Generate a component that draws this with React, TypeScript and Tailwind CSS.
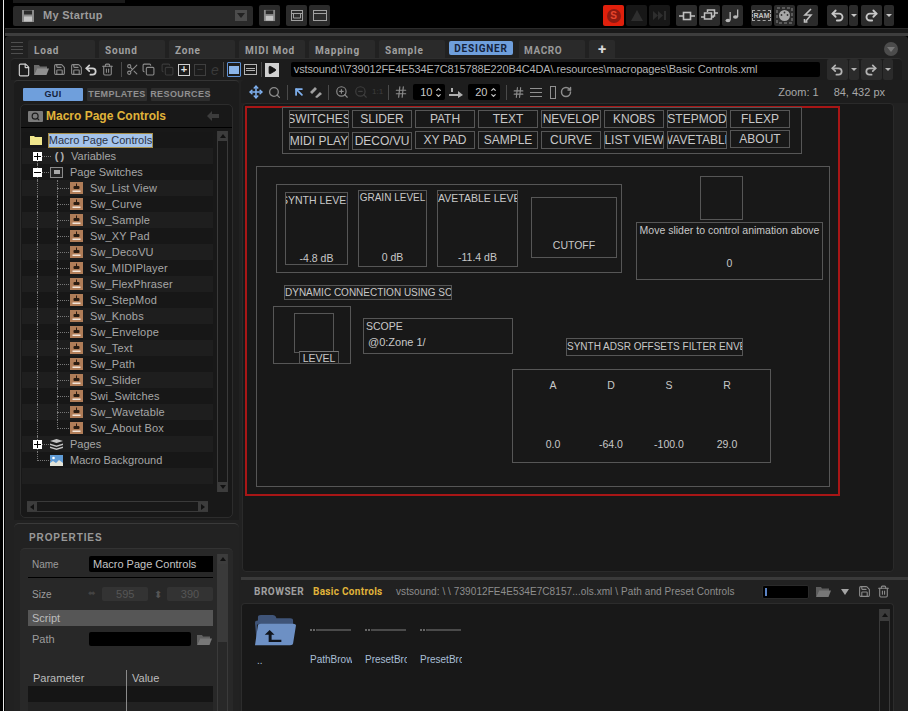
import { ReactNode } from "react";
import {
  ArrowUpLeft,
  ChevronDown,
  ChevronUp,
  Copy,
  File,
  Hash,
  Move,
  Play,
  Redo2,
  RotateCw,
  Save,
  Scissors,
  Search,
  Trash2,
  Undo2,
  ZoomIn,
  ZoomOut,
} from "lucide-react";

const tabs = [
  { label: "Load", cls: "w-[67px]" },
  { label: "Sound", cls: "w-[66px]" },
  { label: "Zone", cls: "w-[66px]" },
  { label: "MIDI Mod", cls: "w-[66px]" },
  { label: "Mapping", cls: "w-[66px]" },
  { label: "Sample", cls: "w-[66px]" },
];

const switches = [
  "Sw_List View",
  "Sw_Curve",
  "Sw_Sample",
  "Sw_XY Pad",
  "Sw_DecoVU",
  "Sw_MIDIPlayer",
  "Sw_FlexPhraser",
  "Sw_StepMod",
  "Sw_Knobs",
  "Sw_Envelope",
  "Sw_Text",
  "Sw_Path",
  "Sw_Slider",
  "Swi_Switches",
  "Sw_Wavetable",
  "Sw_About Box",
];

const adsr = [
  { name: "A", value: "0.0" },
  { name: "D", value: "-64.0" },
  { name: "S", value: "-100.0" },
  { name: "R", value: "29.0" },
];

function FloppyIcon({ size = 14, color = "#8a8a8a" }: { size?: number; color?: string }) {
  return (
    <svg width={size} height={size} viewBox="0 0 14 14">
      <rect x="1" y="1" width="12" height="12" fill={color} />
      <rect x="3" y="1.5" width="8" height="4" fill="#2a2a2a" />
      <rect x="3" y="7.5" width="8" height="5" fill="#c4c4c4" />
    </svg>
  );
}

function FolderIcon({ color = "#8f8f8f" }: { color?: string }) {
  return (
    <svg width="17" height="13" viewBox="0 0 17 13">
      <path d="M1 12V2h5l1 1.5h7V6H4z" fill={color} opacity="0.7" />
      <path d="M1 12l3-6.5h12L13.5 12z" fill={color} />
    </svg>
  );
}

function SwitchIcon() {
  return (
    <svg width="13" height="12" viewBox="0 0 13 12" className="shrink-0">
      <rect width="13" height="12" fill="#b07d58" />
      <rect x="3.5" y="4" width="6" height="3" rx="1" fill="#2a1c12" />
      <rect x="6" y="1.5" width="1" height="3" fill="#2a1c12" />
      <rect x="2.5" y="8.5" width="8" height="1.5" fill="#f2e4d8" />
    </svg>
  );
}

function PlusBox({ minus = false }: { minus?: boolean }) {
  return (
    <span className="relative z-10 flex h-[9px] w-[9px] items-center justify-center bg-white">
      <span className="absolute h-[1px] w-[7px] bg-black" />
      {!minus && <span className="absolute h-[7px] w-[1px] bg-black" />}
    </span>
  );
}

function Bevel({ className, children }: { className: string; children?: ReactNode }) {
  return (
    <div className={`flex h-[21px] shrink-0 items-center justify-center rounded-[2px] bg-[#2b2b2b] text-[#9a9a9a] ${className}`}>
      {children}
    </div>
  );
}

function Sep({ className }: { className: string }) {
  return <span className={`h-[15px] w-px shrink-0 bg-[#4a4a4a] ${className}`} />;
}

function Stepper({ value, className }: { value: string; className: string }) {
  return (
    <div className={`flex h-[16px] w-[32px] shrink-0 items-center justify-between rounded-[2px] bg-black pl-[7px] pr-[3px] text-[11px] text-[#c8c8c8] ${className}`}>
      <span>{value}</span>
      <span className="flex flex-col">
        <ChevronUp size={7} strokeWidth={4} className="-mb-px" />
        <ChevronDown size={7} strokeWidth={4} />
      </span>
    </div>
  );
}

function Node({ className, children }: { className: string; children?: ReactNode }) {
  return (
    <div className={`absolute box-border flex overflow-hidden whitespace-nowrap border border-[#565656] leading-[12px] text-[#c8c8c8] ${className}`}>
      {children}
    </div>
  );
}

function CanvasButton({ className, label }: { className: string; label: string }) {
  return (
    <Node className={`h-[18px] w-[60px] items-center justify-center text-[12px] ${className}`}>
      <span>{label}</span>
    </Node>
  );
}

function TreeRow({ dark, children }: { dark: boolean; children: ReactNode }) {
  return (
    <div className={`relative flex h-4 items-center text-[11px] text-[#a6a6a6] ${dark ? "bg-[#1e1e1e]" : "bg-[#171717]"}`}>
      {children}
    </div>
  );
}

export default function App() {
  return (
    <div className="flex h-[711px] w-[908px] overflow-hidden bg-black font-['Liberation_Sans',Arial,sans-serif]">
      <div className="w-[3px] bg-black" />
      <div className="w-px bg-[#e8e8e8]" />
      <div className="w-px bg-black" />

      <div className="flex w-[903px] flex-col">
        {/* Top instrument bar */}
        <div className="flex h-[3px] bg-black">
          <div className="ml-[8px] h-[3px] w-[112px] bg-[#1b1b1b]" />
        </div>
        <div className="flex h-[26px] items-center border-b border-[#2c2c2c] bg-black">
          <div className="ml-[8px] flex h-[20px] w-[240px] items-center rounded-[2px] bg-[#2a2a2a] pl-[8px]">
            <FloppyIcon size={14} />
            <span className="ml-[8px] text-[11px] font-bold tracking-[0.3px] text-[#9c9c9c]">My Startup</span>
            <span className="ml-auto mr-[6px] flex h-[11px] w-[12px] items-center justify-center bg-[#4c4c4c]">
              <span className="h-0 w-0 border-x-[4px] border-t-[5px] border-x-transparent border-t-[#222]" />
            </span>
          </div>
          <Bevel className="ml-[6px] w-[21px]">
            <FloppyIcon size={13} />
          </Bevel>
          <Bevel className="ml-[6px] w-[21px]">
            <svg width="14" height="13" viewBox="0 0 14 13" fill="none" stroke="#a0a0a0">
              <rect x="1.5" y="1.5" width="11" height="10" />
              <path d="M1.5 4.5h11M3.5 4.5v4.5h7V4.5" />
            </svg>
          </Bevel>
          <Bevel className="ml-[2px] w-[21px]">
            <svg width="16" height="13" viewBox="0 0 16 13" fill="none" stroke="#a0a0a0">
              <rect x="1.5" y="1.5" width="13" height="10" />
              <path d="M1.5 4.5h13" />
            </svg>
          </Bevel>

          <Bevel className="ml-[273px] w-[21px] bg-[#e0200c]">
            <span className="flex h-[14px] w-[14px] items-center justify-center rounded-full bg-[#8c1a10] text-[10px] font-bold text-[#e8462c]">S</span>
          </Bevel>
          <Bevel className="ml-[2px] w-[21px] bg-[#171717]">
            <svg width="14" height="13" viewBox="0 0 14 13">
              <path d="M7 1l6 11H1z" fill="#2e2e2e" />
            </svg>
          </Bevel>
          <Bevel className="ml-[2px] w-[21px] bg-[#171717]">
            <svg width="16" height="11" viewBox="0 0 16 11">
              <path d="M1 1l5 4.5L1 10zM6 1l5 4.5L6 10z M12 1h2v9h-2z" fill="#2e2e2e" />
            </svg>
          </Bevel>
          <Bevel className="ml-[6px] w-[21px]">
            <svg width="16" height="12" viewBox="0 0 16 12" fill="none" stroke="#c0c0c0" strokeWidth="1.6">
              <rect x="4.5" y="2.5" width="7" height="7" />
              <path d="M0 6h4.5M11.5 6H16" />
            </svg>
          </Bevel>
          <Bevel className="ml-[2px] w-[21px]">
            <svg width="17" height="13" viewBox="0 0 17 13" fill="none" stroke="#c0c0c0" strokeWidth="1.5">
              <path d="M6.5 3V1h7v6h-2M3.5 4h7v6h-7zM0 8h3.5M10.5 8H13M13.5 4H17" />
            </svg>
          </Bevel>
          <Bevel className="ml-[2px] w-[21px]">
            <svg width="15" height="14" viewBox="0 0 15 14" fill="#b8b8b8">
              <ellipse cx="3" cy="11.5" rx="2.5" ry="1.7" />
              <rect x="4.5" y="3" width="1.3" height="8" />
              <ellipse cx="10.5" cy="8" rx="2.5" ry="1.7" />
              <rect x="12" y="0.5" width="1.3" height="7.5" />
            </svg>
          </Bevel>
          <Bevel className="ml-[8px] w-[21px]">
            <span className="border border-dashed border-[#a8a8a8] px-[1px] text-[7px] font-bold leading-[9px] text-[#c4c4c4]">RAM</span>
          </Bevel>
          <Bevel className="ml-[2px] w-[21px]">
            <svg width="17" height="17" viewBox="0 0 17 17" fill="none">
              <rect x="1" y="1" width="15" height="15" stroke="#8a8a8a" strokeDasharray="3 2" />
              <circle cx="8.5" cy="8.5" r="5.5" fill="#a8a8a8" />
              <circle cx="8.5" cy="5.5" r="0.9" fill="#333" />
              <circle cx="5.5" cy="8" r="0.9" fill="#333" />
              <circle cx="11.5" cy="8" r="0.9" fill="#333" />
            </svg>
          </Bevel>
          <Bevel className="ml-[2px] w-[21px]">
            <svg width="12" height="15" viewBox="0 0 12 15" fill="none" stroke="#c0c0c0" strokeWidth="1.6">
              <path d="M9 1L3 7h6l-5 6M2.5 11v3h3" />
            </svg>
          </Bevel>
          <Bevel className="ml-[9px] w-[21px]">
            <Undo2 size={15} strokeWidth={3} color="#c8c8c8" />
          </Bevel>
          <Bevel className="ml-[1px] w-[9px]">
            <span className="h-0 w-0 border-x-[3px] border-t-[3px] border-x-transparent border-t-[#c8c8c8]" />
          </Bevel>
          <Bevel className="ml-[3px] w-[21px]">
            <Redo2 size={15} strokeWidth={3} color="#c8c8c8" />
          </Bevel>
          <Bevel className="ml-[2px] w-[10px]">
            <span className="h-0 w-0 border-x-[3px] border-t-[3px] border-x-transparent border-t-[#c8c8c8]" />
          </Bevel>
        </div>
        <div className="h-[4px] bg-[#1a1a1a]" />
        <div className="h-[3px] bg-[#3e3e3e]" />

        {/* Main panel */}
        <div className="flex flex-1 flex-col rounded-t-[4px] bg-[#212121]">
          {/* Editor tabs */}
          <div className="flex h-[22px] items-end">
            <div className="mb-[4px] ml-[6px] flex h-[12px] w-[12px] flex-col justify-between">
              <span className="h-px bg-[#4e4e4e]" />
              <span className="h-px bg-[#4e4e4e]" />
              <span className="h-px bg-[#4e4e4e]" />
              <span className="h-px bg-[#4e4e4e]" />
            </div>
            <div className="ml-[5px] flex gap-[4px] font-['Roboto',sans-serif]">
              {tabs.map((t) => (
                <div
                  key={t.label}
                  className={`flex h-[18px] items-center rounded-t-[2px] bg-[#2a2a2a] pl-[6px] pt-[2px] text-[10px] font-bold tracking-[0.8px] text-[#a0a0a0] ${t.cls}`}
                >
                  {t.label}
                </div>
              ))}
              <div className="mb-[3px] mt-[1px] flex h-[14px] w-[64px] items-center justify-center rounded-[2px] bg-[#6f9fdc] text-[10px] font-bold tracking-[0.8px] text-[#15233c]">
                DESIGNER
              </div>
              <div className="ml-[2px] flex h-[18px] w-[66px] items-center rounded-t-[2px] bg-[#2a2a2a] pl-[5px] pt-[2px] text-[10px] font-bold tracking-[0.6px] text-[#9a9a9a]">
                MACRO
              </div>
              <div className="flex h-[18px] w-[26px] items-center justify-center rounded-t-[2px] bg-[#2a2a2a] text-[15px] font-bold text-[#d8d8d8]">
                +
              </div>
            </div>
            <div className="mb-[2px] ml-auto mr-[10px] flex h-[14px] w-[14px] items-center justify-center rounded-full bg-[#4c4c4c]">
              <span className="h-0 w-0 border-x-[4px] border-t-[5px] border-x-transparent border-t-[#777]" />
            </div>
          </div>

          {/* File toolbar */}
          <div className="mx-[6px] flex h-[22px] items-center rounded-t-[4px] border-t border-[#2e2e2e] bg-[#1c1c1c] text-[#8c8c8c]">
            <File size={14} color="#d0d0d0" className="ml-[6px]" />
            <span className="ml-[2px]"><FolderIcon /></span>
            <Save size={13} className="ml-[3px]" />
            <Save size={13} className="ml-[4px]" />
            <Undo2 size={14} strokeWidth={3} color="#d0d0d0" className="ml-[1px]" />
            <Trash2 size={13} className="ml-[3px]" />
            <Sep className="ml-[7px]" />
            <Scissors size={13} className="ml-[4px]" />
            <Copy size={13} className="ml-[3px]" />
            <Copy size={13} color="#3a3a3a" className="ml-[6px]" />
            <span className="ml-[4px] flex h-[12px] w-[12px] items-center justify-center border border-[#cfcfcf] text-[11px] font-bold leading-none text-[#e0e0e0]">+</span>
            <span className="ml-[4px] flex h-[12px] w-[12px] items-center justify-center border border-[#3e3e3e] text-[11px] leading-none text-[#3e3e3e]">−</span>
            <span className="ml-[5px] text-[14px] italic leading-none text-[#3a3a3a]">e</span>
            <Sep className="ml-[4px]" />
            <span className="ml-[3px] flex h-[15px] w-[14px] items-center justify-center rounded-[1px] border border-[#5f92d6]">
              <span className="h-[8px] w-[10px] bg-[#8ab4e8]" />
            </span>
            <span className="ml-[3px] flex h-[11px] w-[13px] flex-col justify-center gap-px border border-[#b4b4b4] px-px">
              <span className="h-px bg-[#b4b4b4]" />
              <span className="h-px bg-[#b4b4b4]" />
            </span>
            <Sep className="ml-[4px]" />
            <span className="ml-[3px] flex h-[14px] w-[14px] items-center justify-center bg-[#d0d0d0]">
              <Play size={10} fill="#111" color="#111" />
            </span>
            <div className="ml-[12px] flex h-[15px] w-[529px] items-center rounded-[2px] bg-black pl-[3px] text-[11px] tracking-[-0.13px] text-[#b4b4b4]">
              vstsound:\\739012FE4E534E7C815788E220B4C4DA\.resources\macropages\Basic Controls.xml
            </div>
            <Bevel className="ml-[7px] h-[18px] w-[21px]">
              <Undo2 size={14} strokeWidth={3} color="#b4b4b4" />
            </Bevel>
            <Bevel className="ml-[1px] h-[18px] w-[10px]">
              <span className="h-0 w-0 border-x-[3px] border-t-[3px] border-x-transparent border-t-[#b4b4b4]" />
            </Bevel>
            <Bevel className="ml-[2px] h-[18px] w-[21px]">
              <Redo2 size={14} strokeWidth={3} color="#b4b4b4" />
            </Bevel>
            <Bevel className="ml-[1px] h-[18px] w-[10px]">
              <span className="h-0 w-0 border-x-[3px] border-t-[3px] border-x-transparent border-t-[#b4b4b4]" />
            </Bevel>
          </div>

          <div className="flex min-h-0 flex-1">
            {/* Left column */}
            <div className="flex w-[234px] shrink-0 flex-col pl-[9px]">
              <div className="flex h-[440px] flex-col rounded-t-[4px] border-t border-[#343434] bg-[#1c1c1c] px-[6px]">
                <div className="ml-[3px] mt-[7px] flex gap-[4px] text-[9px] font-bold tracking-[0.4px]">
                  <div className="flex h-[13px] w-[60px] items-center justify-center rounded-[1px] bg-[#6f9fdc] text-[#15233c]">GUI</div>
                  <div className="flex h-[13px] w-[60px] items-center justify-center rounded-[1px] bg-[#2e2e2e] text-[#909090]">TEMPLATES</div>
                  <div className="flex h-[13px] w-[59px] items-center justify-center rounded-[1px] bg-[#2e2e2e] text-[#909090]">RESOURCES</div>
                </div>
                <div className="mt-[3px] flex h-[414px] flex-col rounded-[5px] border border-[#2c2c2c] bg-[#181818]">
                  <div className="flex h-[23px] items-center border-b border-black pl-[7px]">
                    <span className="flex h-[11px] w-[15px] items-center justify-center rounded-[1px] bg-[#7a7a7a]">
                      <Search size={9} strokeWidth={3} color="#1c1c1c" />
                    </span>
                    <span className="ml-[3px] text-[12px] font-bold text-[#e0b43a]">Macro Page Controls</span>
                    <svg width="12" height="10" viewBox="0 0 12 10" className="ml-auto mr-[13px]" fill="#3c3c3c">
                      <path d="M0 5l5-5v3h7v4H5v3z" />
                    </svg>
                  </div>
                  <div className="flex flex-1 pl-[1px] pr-[3px]">
                    <div className="mt-[4px] flex w-[191px] flex-col">
                      <TreeRow dark={false}>
                        <svg width="12" height="10" viewBox="0 0 12 10" className="ml-[8px]">
                          <path d="M0 10V1h4l1 1h7v8z" fill="#f0e68c" />
                        </svg>
                        <span className="ml-[6px] flex h-[15px] w-[105px] items-center justify-center whitespace-nowrap border border-[#a88f4a] bg-[#a5c4ec] text-[#2c3344]">
                          Macro Page Controls
                        </span>
                      </TreeRow>
                      <TreeRow dark>
                        <span className="absolute bottom-0 left-[15px] top-[8px] border-l border-dotted border-[#777]" />
                        <span className="absolute left-[15px] top-[8px] w-[14px] border-t border-dotted border-[#777]" />
                        <span className="ml-[11px]"><PlusBox /></span>
                        <span className="relative z-10 ml-[9px] w-[19px] bg-[#1e1e1e] text-center text-[11px] font-bold tracking-[2px] text-[#b0b0b0]">()</span>
                        <span className="ml-[1px]">Variables</span>
                      </TreeRow>
                      <TreeRow dark={false}>
                        <span className="absolute bottom-0 left-[15px] top-0 border-l border-dotted border-[#777]" />
                        <span className="absolute left-[15px] top-[8px] w-[14px] border-t border-dotted border-[#777]" />
                        <span className="ml-[11px]"><PlusBox minus /></span>
                        <span className="relative z-10 ml-[8px] flex h-[11px] w-[13px] items-center justify-center border border-[#8a8a8a] bg-[#222]">
                          <span className="h-[4px] w-[6px] bg-[#a8a8a8]" />
                        </span>
                        <span className="ml-[7px]">Page Switches</span>
                      </TreeRow>
                      {switches.map((name, i) => (
                        <TreeRow key={name} dark={i % 2 === 0}>
                          <span className="absolute bottom-0 left-[15px] top-0 border-l border-dotted border-[#777]" />
                          <span className={`absolute left-[35px] top-0 border-l border-dotted border-[#777] ${i === switches.length - 1 ? "h-[9px]" : "h-4"}`} />
                          <span className="absolute left-[35px] top-[8px] w-[12px] border-t border-dotted border-[#777]" />
                          <span className="ml-[48px]"><SwitchIcon /></span>
                          <span className="ml-[7px] tracking-[0.15px]">{name}</span>
                        </TreeRow>
                      ))}
                      <TreeRow dark>
                        <span className="absolute bottom-0 left-[15px] top-0 border-l border-dotted border-[#777]" />
                        <span className="absolute left-[15px] top-[8px] w-[14px] border-t border-dotted border-[#777]" />
                        <span className="ml-[11px]"><PlusBox /></span>
                        <svg width="13" height="11" viewBox="0 0 13 11" className="relative z-10 ml-[8px] bg-[#1e1e1e]" fill="#c4c4c4">
                          <path d="M6.5 0L13 2 6.5 4 0 2zM0 4.5L6.5 6.5 13 4.5v1.5L6.5 8 0 6zM0 7.5L6.5 9.5 13 7.5V9L6.5 11 0 9z" />
                        </svg>
                        <span className="ml-[7px]">Pages</span>
                      </TreeRow>
                      <TreeRow dark={false}>
                        <span className="absolute left-[15px] top-0 h-[9px] border-l border-dotted border-[#777]" />
                        <span className="absolute left-[15px] top-[8px] w-[14px] border-t border-dotted border-[#777]" />
                        <svg width="13" height="11" viewBox="0 0 13 11" className="ml-[28px]">
                          <rect width="13" height="11" fill="#5f9bd6" />
                          <path d="M0 11V8l3-2 3 2 3-3 4 3v3z" fill="#e4e4d8" />
                          <circle cx="3.5" cy="3" r="1.3" fill="#fff" />
                        </svg>
                        <span className="ml-[7px]">Macro Background</span>
                      </TreeRow>
                      <div className="h-4 bg-[#1e1e1e]" />
                    </div>
                    <div className="ml-[4px] mt-[3px] flex h-[361px] w-[11px] flex-col border-x border-[#3a3a3a]">
                      <div className="flex h-[10px] items-center justify-center bg-[#3c3c3c]">
                        <span className="h-0 w-0 border-x-[3px] border-b-[4px] border-x-transparent border-b-[#111]" />
                      </div>
                      <div className="flex-1" />
                      <div className="flex h-[10px] items-center justify-center bg-[#3c3c3c]">
                        <span className="h-0 w-0 border-x-[3px] border-t-[4px] border-x-transparent border-t-[#111]" />
                      </div>
                    </div>
                  </div>
                  <div className="mb-[5px] ml-[6px] flex h-[11px] w-[181px] border-y border-[#3a3a3a]">
                    <div className="flex h-[9px] w-[10px] items-center justify-center bg-[#3c3c3c]">
                      <span className="h-0 w-0 border-y-[3px] border-r-[4px] border-y-transparent border-r-[#111]" />
                    </div>
                    <div className="flex-1" />
                    <div className="flex h-[9px] w-[10px] items-center justify-center bg-[#3c3c3c]">
                      <span className="h-0 w-0 border-y-[3px] border-l-[4px] border-y-transparent border-l-[#111]" />
                    </div>
                  </div>
                </div>
              </div>

              {/* Properties */}
              <div className="mt-[3px] flex h-[188px] flex-col rounded-t-[5px] border-t border-[#3a3a3a] bg-[#222] px-[6px]">
                <div className="ml-[9px] mt-[8px] text-[10px] font-bold leading-[12px] tracking-[0.9px] text-[#999]">PROPERTIES</div>
                <div className="mt-[4px] flex flex-1 rounded-t-[5px] border-t border-[#333] bg-[#282828]">
                  <div className="ml-[8px] flex w-[185px] flex-col overflow-hidden text-[10px] text-[#9c9c9c]">
                    <div className="mt-[6px] flex h-[23px] items-center border-b border-black pb-[4px] pl-[4px]">
                      <span className="w-[57px]">Name</span>
                      <span className="flex h-[16px] flex-1 items-center rounded-l-[2px] bg-black pl-[4px] text-[11px] text-[#c4c4c4]">Macro Page Controls</span>
                    </div>
                    <div className="mt-[8px] flex h-[16px] items-center pl-[4px]">
                      <span className="w-[57px]">Size</span>
                      <span className="w-[12px] text-[9px] text-[#444]">⬌</span>
                      <span className="ml-[3px] flex h-[14px] w-[46px] shrink-0 items-center justify-center rounded-[2px] bg-[#333] text-[11px] text-[#565656]">595</span>
                      <span className="ml-[6px] w-[12px] text-[10px] text-[#555]">⬍</span>
                      <span className="ml-[1px] flex h-[14px] w-[46px] shrink-0 items-center justify-center rounded-[2px] bg-[#333] text-[11px] text-[#565656]">390</span>
                    </div>
                    <div className="mt-[8px] flex h-[16px] items-center bg-[#565656] pl-[4px] text-[11px] text-[#bdbdbd]">Script</div>
                    <div className="mt-[5px] flex h-[16px] items-center pl-[4px] text-[11px]">
                      <span className="w-[57px]">Path</span>
                      <span className="h-[14px] w-[103px] rounded-[2px] bg-black" />
                      <span className="ml-[5px]"><FolderIcon color="#777" /></span>
                    </div>
                    <div className="mt-[23px] flex h-[16px] items-center text-[11px] text-[#bdbdbd]">
                      <span className="w-[99px] border-r border-[#8a8a8a] pl-[5px] leading-[16px]">Parameter</span>
                      <span className="pl-[5px]">Value</span>
                    </div>
                    <div className="flex h-4 bg-[#151515]">
                      <span className="w-[99px] border-r border-[#8a8a8a]" />
                    </div>
                    <div className="flex flex-1 bg-[#222]">
                      <span className="w-[99px] border-r border-[#8a8a8a]" />
                    </div>
                  </div>
                  <div className="ml-[4px] mt-[5px] flex w-[11px] flex-col border-x border-[#3a3a3a]">
                    <div className="flex h-[10px] items-center justify-center bg-[#3c3c3c]">
                      <span className="h-0 w-0 border-x-[3px] border-b-[4px] border-x-transparent border-b-[#111]" />
                    </div>
                    <div className="h-[78px] bg-[#3a3a3a]" />
                  </div>
                </div>
              </div>
            </div>

            {/* Right column */}
            <div className="flex min-w-0 flex-1 flex-col pl-[2px]">
              <div className="flex h-[23px] shrink-0 items-center rounded-tl-[4px] bg-[#1d1d1d] pr-[23px] pt-[1px] text-[#8c8c8c]">
                <Move size={14} strokeWidth={2.6} color="#7fb0ee" className="ml-[8px]" />
                <Search size={13} strokeWidth={2.4} className="ml-[5px]" />
                <Sep className="ml-[6px]" />
                <ArrowUpLeft size={14} strokeWidth={3} color="#7fb0ee" className="ml-[4px]" />
                <svg width="14" height="14" viewBox="0 0 14 14" className="ml-[3px]" fill="#a0a0a0">
                  <path d="M1 7l5-5 2 2-5 5zM6 12l5-5 2 2-5 4z" />
                  <path d="M2 13L12 1" stroke="#1d1d1d" strokeWidth="1.5" />
                </svg>
                <Sep className="ml-[5px]" />
                <ZoomIn size={14} className="ml-[6px]" />
                <ZoomOut size={14} color="#3e3e3e" className="ml-[5px]" />
                <span className="ml-[4px] text-[8px] text-[#3e3e3e]">1:1</span>
                <Sep className="ml-[5px]" />
                <Hash size={14} className="ml-[5px]" />
                <Stepper value="10" className="ml-[5px]" />
                <svg width="15" height="11" viewBox="0 0 15 11" className="ml-[4px]" fill="#b0b0b0">
                  <path d="M0 7h9V4l5 4-5 3V9H0zM2 1h2v4H2z" />
                </svg>
                <Stepper value="20" className="ml-[4px]" />
                <Sep className="ml-[6px]" />
                <Hash size={13} className="ml-[5px]" />
                <span className="ml-[5px] flex h-[9px] w-[12px] flex-col justify-between">
                  <span className="h-px bg-[#909090]" />
                  <span className="h-px bg-[#909090]" />
                  <span className="h-px bg-[#909090]" />
                </span>
                <span className="ml-[8px] h-[13px] w-[6px] border border-[#909090]" />
                <RotateCw size={12} strokeWidth={3} className="ml-[4px]" />
                <span className="ml-auto text-[11px] text-[#a8a8a8]">Zoom: 1</span>
                <span className="ml-[15px] text-[11px] text-[#a8a8a8]">84, 432 px</span>
              </div>

              {/* Macro page canvas */}
              <div className="ml-[1px] mr-[14px] flex h-[469px] shrink-0 rounded-[4px] border border-[#2a2a2a] bg-[#181818] pl-[2px]">
                <div className="relative flex-1 text-[10.5px]">
                  <div className="absolute left-0 top-[2px] h-[390px] w-[595px] border-2 border-[#a81616]" />

                  <Node className="left-[37px] top-[3px] h-[47px] w-[520px]" />
                  <CanvasButton className="left-[44px] top-[6px]" label="SWITCHES" />
                  <CanvasButton className="left-[107px] top-[6px]" label="SLIDER" />
                  <CanvasButton className="left-[170px] top-[6px]" label="PATH" />
                  <CanvasButton className="left-[233px] top-[6px]" label="TEXT" />
                  <CanvasButton className="left-[296px] top-[6px]" label="NEVELOP" />
                  <CanvasButton className="left-[359px] top-[6px]" label="KNOBS" />
                  <CanvasButton className="left-[422px] top-[6px]" label="STEPMOD" />
                  <CanvasButton className="left-[485px] top-[6px]" label="FLEXP" />
                  <CanvasButton className="left-[44px] top-[28px]" label="MIDI PLAY" />
                  <CanvasButton className="left-[107px] top-[28px]" label="DECO/VU" />
                  <CanvasButton className="left-[170px] top-[27px]" label="XY PAD" />
                  <CanvasButton className="left-[233px] top-[27px]" label="SAMPLE" />
                  <CanvasButton className="left-[296px] top-[27px]" label="CURVE" />
                  <CanvasButton className="left-[359px] top-[27px]" label="LIST VIEW" />
                  <CanvasButton className="left-[422px] top-[27px]" label="WAVETABLE" />
                  <CanvasButton className="left-[485px] top-[26px]" label="ABOUT" />

                  <Node className="left-[11px] top-[62px] h-[321px] w-[574px]" />
                  <Node className="left-[31px] top-[80px] h-[89px] w-[346px]" />

                  <Node className="left-[40px] top-[88px] h-[73px] w-[63px] flex-col items-center justify-between pt-[1px]">
                    <span>SYNTH LEVEL</span>
                    <span>-4.8 dB</span>
                  </Node>
                  <Node className="left-[113px] top-[86px] h-[77px] w-[69px] flex-col items-center justify-between pb-[3px] pt-[1px]">
                    <span className="text-[10px]">GRAIN LEVEL</span>
                    <span>0 dB</span>
                  </Node>
                  <Node className="left-[192px] top-[86px] h-[77px] w-[81px] flex-col items-center justify-between pb-[3px] pt-[1px]">
                    <span>WAVETABLE LEVEL</span>
                    <span>-11.4 dB</span>
                  </Node>
                  <Node className="left-[286px] top-[93px] h-[61px] w-[86px] flex-col items-center justify-end pb-[6px]">
                    <span>CUTOFF</span>
                  </Node>
                  <Node className="left-[455px] top-[72px] h-[44px] w-[43px]" />
                  <Node className="left-[391px] top-[118px] h-[58px] w-[187px] flex-col items-center pt-[1px]">
                    <span>Move slider to control animation above</span>
                    <span className="mt-[21px]">0</span>
                  </Node>

                  <Node className="left-[39px] top-[181px] h-[15px] w-[168px] items-center bg-[#1c1c1c] text-[10px]">
                    <span>DYNAMIC CONNECTION USING SCRIPT</span>
                  </Node>
                  <Node className="left-[28px] top-[202px] h-[58px] w-[78px]" />
                  <Node className="left-[49px] top-[209px] h-[40px] w-[40px]" />
                  <Node className="left-[54px] top-[247px] h-[13px] w-[40px] items-center justify-center border-t-[#777] bg-[#181818]">
                    <span>LEVEL</span>
                  </Node>
                  <Node className="left-[118px] top-[214px] h-[36px] w-[150px] flex-col pl-[2px] pt-[1px]">
                    <span>SCOPE</span>
                    <span className="ml-[2px] mt-[4px] text-[11px]">@0:Zone 1/</span>
                  </Node>
                  <Node className="left-[321px] top-[234px] h-[18px] w-[177px] items-center text-[10px]">
                    <span>SYNTH ADSR OFFSETS FILTER ENVELOPE</span>
                  </Node>
                  <Node className="left-[267px] top-[265px] h-[94px] w-[259px] flex-col pl-[11px] pt-[9px]">
                    <div className="grid w-[232px] grid-cols-4 justify-items-center">
                      {adsr.map((a) => (
                        <span key={a.name}>{a.name}</span>
                      ))}
                    </div>
                    <div className="mt-[47px] grid w-[232px] grid-cols-4 justify-items-center">
                      {adsr.map((a) => (
                        <span key={a.name}>{a.value}</span>
                      ))}
                    </div>
                  </Node>
                </div>
              </div>
              <div className="h-[5px] shrink-0" />
              <div className="h-[3px] shrink-0 bg-[#3a3a3a]" />

              {/* Browser */}
              <div className="flex min-h-0 flex-1 flex-col rounded-t-[4px] bg-[#212121]">
                <div className="flex h-[23px] shrink-0 items-center pl-[13px] text-[#8c8c8c]">
                  <span className="w-[59px] font-['Roboto',sans-serif] text-[10px] font-bold tracking-[0.5px] text-[#a0a0a0]">BROWSER</span>
                  <span className="w-[83px] whitespace-nowrap font-['Roboto',sans-serif] text-[10px] font-bold tracking-[0.3px] text-[#e0b43a]">Basic Controls</span>
                  <span className="w-[366px] whitespace-nowrap text-[10px] tracking-[0.08px] text-[#8e8e8e]">
                    vstsound: \ \ 739012FE4E534E7C8157...ols.xml \ Path and Preset Controls
                  </span>
                  <span className="flex h-[14px] w-[47px] items-center rounded-[2px] border border-[#2a2a2a] bg-black pl-[2px]">
                    <span className="h-[8px] w-[2px] bg-[#5a82c4]" />
                  </span>
                  <span className="ml-[6px]"><FolderIcon color="#777" /></span>
                  <span className="ml-[9px] h-0 w-0 border-x-[4px] border-t-[6px] border-x-transparent border-t-[#a4a4a4]" />
                  <Save size={13} className="ml-[9px]" />
                  <Trash2 size={13} className="ml-[6px]" />
                </div>
                <div className="mr-[14px] flex min-h-0 flex-1 rounded-t-[4px] border-l border-r border-t border-[#2c2c2c] bg-[#181818] pl-[13px] pr-[3px] text-[10px] text-[#a9bfd6]">
                  <div className="flex w-[54px] shrink-0 flex-col pt-[11px]">
                    <svg width="41" height="31" viewBox="0 0 42 39" preserveAspectRatio="none">
                      <path d="M2 38L0 10q0-3 3-3V3q0-3 3-3h12q3 0 4 4h14q3 0 3 3v5H2z" fill="#3f5478" />
                      <path d="M0 38L3 13q0-2 3-2h33q3 0 3 2l-3 23q0 2-3 2z" fill="#6d90c4" />
                      <path d="M10 25l5-6 5 6h-3v6h10v3H14v-9z" fill="#10141c" />
                    </svg>
                    <span className="ml-[2px] mt-[9px] leading-[12px]">..</span>
                  </div>
                  {["PathBrowser", "PresetBrowser", "PresetBrowser"].map((name, i) => (
                    <div key={i} className="ml-[1px] flex w-[54px] shrink-0 flex-col pt-[25px]">
                      <span className="flex h-[2px] w-[41px] gap-px">
                        <span className="w-[2px] bg-[#666]" />
                        <span className="w-[2px] bg-[#666]" />
                        <span className="flex-1 bg-[#4a4a4a]" />
                      </span>
                      <span className="mt-[23px] w-[42px] overflow-hidden whitespace-nowrap leading-[12px]">{name}</span>
                    </div>
                  ))}
                  <div className="ml-auto mt-[5px] flex h-full w-[11px] flex-col border-x border-[#3a3a3a]">
                    <div className="flex h-[12px] items-center justify-center bg-[#3c3c3c]">
                      <span className="h-0 w-0 border-x-[3px] border-b-[4px] border-x-transparent border-b-[#111]" />
                    </div>
                  </div>
                </div>
              </div>
            </div>
          </div>
        </div>
      </div>
    </div>
  );
}
